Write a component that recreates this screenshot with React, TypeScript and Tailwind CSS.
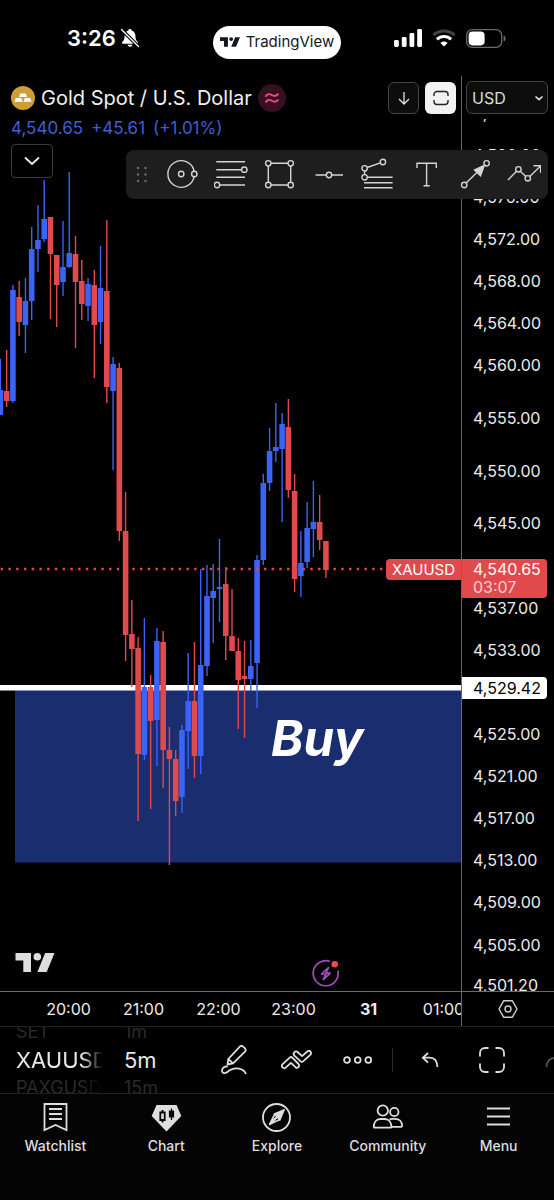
import { ReactNode } from "react";

type Candle = ["up" | "down", number, number, number, number];

// direction, high, body top, body bottom, low
const candles: Candle[] = [
  ["up", 359, 390, 415, 415],
  ["down", 350, 391, 401, 407],
  ["up", 285, 290, 401, 403],
  ["down", 281, 297, 322, 336],
  ["up", 278, 301, 325, 353],
  ["up", 227, 249, 301, 320],
  ["up", 205, 240, 249, 272],
  ["up", 180, 219, 239, 242],
  ["down", 217, 217, 254, 319],
  ["down", 255, 255, 285, 327],
  ["up", 221, 267, 282, 296],
  ["up", 172, 253, 267, 268],
  ["down", 236, 254, 282, 348],
  ["down", 260, 281, 304, 320],
  ["up", 278, 284, 306, 321],
  ["down", 270, 285, 325, 378],
  ["up", 246, 288, 322, 344],
  ["down", 220, 291, 387, 403],
  ["up", 357, 364, 391, 470],
  ["down", 363, 368, 531, 541],
  ["down", 492, 531, 635, 661],
  ["down", 600, 634, 649, 687],
  ["down", 637, 648, 754, 821],
  ["up", 618, 687, 755, 760],
  ["down", 675, 687, 721, 809],
  ["up", 628, 641, 720, 766],
  ["down", 631, 642, 750, 788],
  ["down", 727, 750, 759, 865],
  ["down", 750, 759, 801, 816],
  ["up", 725, 730, 797, 813],
  ["up", 653, 701, 731, 769],
  ["down", 642, 701, 756, 778],
  ["up", 569, 665, 756, 774],
  ["up", 565, 596, 666, 676],
  ["up", 564, 591, 598, 643],
  ["up", 539, 587, 589, 622],
  ["down", 567, 584, 636, 660],
  ["down", 589, 636, 651, 651],
  ["down", 638, 651, 680, 729],
  ["down", 641, 676, 679, 738],
  ["up", 640, 666, 679, 691],
  ["up", 555, 560, 663, 708],
  ["up", 474, 483, 560, 565],
  ["up", 428, 451, 483, 491],
  ["up", 403, 447, 451, 462],
  ["up", 413, 424, 449, 522],
  ["down", 399, 427, 490, 498],
  ["down", 474, 491, 579, 592],
  ["up", 531, 563, 576, 597],
  ["up", 502, 528, 562, 568],
  ["up", 481, 522, 529, 557],
  ["down", 495, 522, 540, 550],
  ["down", 541, 541, 570, 578],
];

const UP = "#3b63f6";
const DOWN = "#e04a4d";
const PLOT_TOP = 76;

const axisPrices = [
  4584, 4580, 4576, 4572, 4568, 4564, 4560, 4555, 4550, 4545, 4537, 4533,
  4525, 4521, 4517, 4513, 4509, 4505, 4501.2,
];

const times = ["20:00", "21:00", "22:00", "23:00", "31", "01:00"];

const priceToY = (price: number) => Math.round((4572 - price) * 10.53) + 163;

const formatPrice = (price: number) =>
  price.toLocaleString("en-US", { minimumFractionDigits: 2 });

function TradingViewLogo({ className }: { className: string }) {
  return (
    <svg className={className} viewBox="0 0 39 19" fill="currentColor">
      <path d="M0 0h15.5v19H7.8V7.6H0z" />
      <circle cx="21.8" cy="3.8" r="3.8" />
      <path d="M29.6 0H39l-7.8 19h-9.3z" />
    </svg>
  );
}

function StatusBar() {
  return (
    <header className="grid h-[76px] grid-cols-3 items-center">
      <div className="flex items-center gap-1 pl-[67px] text-white">
        <span className="text-[22px] leading-6 font-semibold">3:26</span>
        <svg className="h-5 w-5 shrink-0" viewBox="0 0 20 20" fill="currentColor">
          <path d="M10 1c.9 0 1.6.6 1.7 1.4 2.3.8 3.7 2.8 3.7 5.2 0 3.5.7 4.7 1.7 5.7.6.6.9 1 .9 1.4 0 .6-.5 1-1.3 1H3.3c-.8 0-1.3-.4-1.3-1 0-.4.3-.8.9-1.4 1-1 1.7-2.2 1.7-5.7 0-2.4 1.4-4.4 3.7-5.2C8.4 1.6 9.1 1 10 1z" />
          <path d="M7.5 16.800h5c-.3 1.3-1.3 2-2.5 2s-2.2-.7-2.5-2z" />
          <path d="M1.500 1.500l17 17" stroke="#000" strokeWidth="3.6" />
          <path d="M1.500 1.500l17 17" stroke="currentColor" strokeWidth="1.4" strokeLinecap="round" />
        </svg>
      </div>
      <div className="mt-2 flex h-[33px] w-32 items-center justify-center gap-[6px] justify-self-center rounded-full bg-white text-[#131722]">
        <TradingViewLogo className="h-[10px] w-5" />
        <span className="text-[15px]">TradingView</span>
      </div>
      <div className="flex items-center justify-end gap-[10px] pr-12">
        <svg className="h-[18px] w-7" viewBox="0 0 28 18" fill="#fff">
          <rect x="0" y="11" width="4.8" height="7" rx="1.4" />
          <rect x="7.8" y="8" width="4.8" height="10" rx="1.4" />
          <rect x="15.5" y="4" width="4.8" height="14" rx="1.4" />
          <rect x="23.2" y="0" width="4.8" height="18" rx="1.4" />
        </svg>
        <svg className="h-[18px] w-6" viewBox="0 0 24 18" fill="none" strokeWidth="3">
          <path d="M1.5 6.2a15.4 15.4 0 0 1 21 0" stroke="#444" />
          <path d="M5 10.4a10.2 10.2 0 0 1 14 0" stroke="#fff" />
          <path d="M12 17.6l-3.6-3.7a5.2 5.2 0 0 1 7.2 0z" fill="#fff" />
        </svg>
        <svg className="h-[19px] w-10" viewBox="0 0 40 19" fill="none">
          <rect x="0.7" y="0.7" width="35" height="17.6" rx="5.5" stroke="#6b6b6b" strokeWidth="1.3" />
          <rect x="2.6" y="2.6" width="16" height="13.8" rx="3.8" fill="#fff" />
          <path d="M37.6 6.5c1.5.5 2 1.600 2 3s-.5 2.500-2 3z" fill="#6b6b6b" />
        </svg>
      </div>
    </header>
  );
}

function Plot() {
  return (
    <svg className="block h-[915px] w-full" role="img" aria-label="Gold Spot candles">
      <g transform={`translate(0 ${-PLOT_TOP})`}>
        <rect x="15" y="690" width="100%" height="172.5" fill="#192d6f" />
        <rect x="0" y="685" width="100%" height="5.5" fill="#fff" />
        {candles.map(([dir, high, top, bottom, low], i) => {
          const x = 0.4 + i * 6.26;
          const color = dir === "up" ? UP : DOWN;
          return (
            <g key={i} fill={color}>
              <rect x={x - 0.7} y={high} width={1.4} height={low - high} />
              <rect x={x - 2.8} y={top} width={5.6} height={bottom - top} />
            </g>
          );
        })}
        <line
          x1="0.7"
          x2="384"
          y1="569"
          y2="569"
          stroke={DOWN}
          strokeWidth="2.4"
          strokeDasharray="2.4 5.34"
        />
        <text x="271" y="756" fill="#fff" className="text-[49px] font-bold italic">
          Buy
        </text>
      </g>
    </svg>
  );
}

function ChartHeader() {
  return (
    <div className="absolute inset-x-0 top-0 pt-[5px] pr-[5px] pl-[11px]">
      <div className="flex items-center gap-[6px]">
        <svg className="h-6 w-6 shrink-0" viewBox="0 0 24 24">
          <circle cx="12" cy="12" r="12" fill="#cf9d35" />
          <path
            d="M9.3 7.500h5.400l1.4 3.600H7.900zM4.800 12h5.400l1.4 3.700H3.4zM13.800 12h5.400l1.4 3.700h-8.200z"
            fill="#fff"
          />
        </svg>
        <h1 className="text-xl leading-[34px] whitespace-nowrap text-[#f0f0f0]">Gold Spot / U.S. Dollar</h1>
        <svg className="h-7 w-7 shrink-0" viewBox="0 0 28 28" fill="none">
          <circle cx="14" cy="14" r="14" fill="#35101f" />
          <path
            d="M7.5 12.700c1.6-3 3.8-3.2 6.3-1.700s4.6 1.400 6.7-1.300M7.5 18.500c1.6-3 3.8-3.200 6.3-1.700s4.6 1.400 6.700-1.300"
            stroke="#ee4b86"
            strokeWidth="1.9"
          />
        </svg>
        <button
          aria-label="Scroll down"
          className="ml-auto flex h-8 w-[31px] shrink-0 items-center justify-center rounded-md border border-[#444] bg-[#0d0d0d]"
        >
          <svg className="h-4 w-4" viewBox="0 0 16 16" fill="none" stroke="#e4e4e4" strokeWidth="1.3">
            <path d="M8 2v12M3 9l5 5 5-5" />
          </svg>
        </button>
        <button
          aria-label="Fit"
          className="flex h-8 w-[31px] shrink-0 items-center justify-center rounded-md bg-[#f2f2f2]"
        >
          <svg className="h-4 w-4" viewBox="0 0 16 16" fill="none" stroke="#222" strokeWidth="1.4">
            <path d="M1 6V4.500a3 3 0 0 1 3-3h8a3 3 0 0 1 3 3V6M1 10v1.500a3 3 0 0 0 3 3h8a3 3 0 0 0 3-3V10" />
          </svg>
        </button>
      </div>
      <p className="mt-[3px] flex gap-2 text-[17px] leading-5 text-[#3f5fd8]">
        <span>4,540.65</span>
        <span>+45.61</span>
        <span>(+1.01%)</span>
      </p>
      <button
        aria-label="Show indicators"
        className="mt-[6px] flex h-[34px] w-[42px] items-center justify-center rounded-[4px] border border-[#3a3a3a] bg-black"
      >
        <svg className="h-4 w-4" viewBox="0 0 16 16" fill="none" stroke="#f0f0f0" strokeWidth="1.8">
          <path d="M1 4.500l7 6.500 7-6.500" />
        </svg>
      </button>
    </div>
  );
}

const tools: { name: string; icon: ReactNode }[] = [
  {
    name: "Circle",
    icon: (
      <>
        <path d="M29.2 14.300A13.3 13.3 0 1 0 29.2 19.700" />
        <circle cx="16.2" cy="17" r="2.7" />
        <circle cx="29.3" cy="17" r="2.7" />
      </>
    ),
  },
  {
    name: "Fib retracement",
    icon: (
      <>
        <path d="M2.3 4.700H31M2.3 12.700h25.500M2.3 20.300H31M5.800 28H31" />
        <circle cx="30.3" cy="12.7" r="2.7" />
        <circle cx="3" cy="28" r="2.7" />
      </>
    ),
  },
  {
    name: "Rectangle",
    icon: (
      <>
        <path d="M8 6.300h17M8 28h17M5.300 9v16.300M27.700 9v16.300" />
        <circle cx="5.3" cy="6.3" r="2.7" />
        <circle cx="27.7" cy="6.3" r="2.7" />
        <circle cx="5.3" cy="28" r="2.7" />
        <circle cx="27.7" cy="28" r="2.7" />
      </>
    ),
  },
  {
    name: "Horizontal line",
    icon: (
      <>
        <path d="M3.5 18h10.800M19.700 18h11.300" />
        <circle cx="17" cy="18" r="2.7" />
      </>
    ),
  },
  {
    name: "Fib extension",
    icon: (
      <>
        <path d="M7.200 10.500l13.200-4.600M4.600 14v3.600M7.300 20.300h25.300M4 25.700h28.600M4 30.700h28.600" />
        <circle cx="22.9" cy="5" r="2.7" />
        <circle cx="4.6" cy="11.3" r="2.7" />
        <circle cx="4.6" cy="20.3" r="2.7" />
      </>
    ),
  },
  {
    name: "Text",
    icon: <path d="M8 11V6.300h19.300V11M17.600 6.300v22.400M14.500 28.700h6.300" />,
  },
  {
    name: "Arrow",
    icon: (
      <>
        <path d="M8.100 26.100L24 10.500" />
        <path d="M26.300 8.300L16.500 13l6 5.800z" fill="currentColor" />
        <circle cx="28.6" cy="6.3" r="2.7" />
        <circle cx="6.2" cy="28" r="2.7" />
      </>
    ),
  },
  {
    name: "Path",
    icon: (
      <>
        <path d="M1 23l8.500-8.700M13.300 14.200l5.600 5.200M22.700 19.400L33.600 8.900M26.500 8.700h7.100v7" />
        <circle cx="11.4" cy="12.3" r="2.7" />
        <circle cx="20.8" cy="21.3" r="2.7" />
      </>
    ),
  },
];

function DrawingToolbar() {
  return (
    <div className="absolute top-[74px] right-[6px] left-[126px] flex h-[49px] items-center rounded-lg bg-[#1e1e1e] text-[#d4d4d4]">
      <svg className="mr-2 ml-2 h-5 w-4 shrink-0" viewBox="0 0 16 20" fill="#666">
        <circle cx="4" cy="3" r="1.3" />
        <circle cx="11.5" cy="3" r="1.3" />
        <circle cx="4" cy="9.5" r="1.3" />
        <circle cx="11.5" cy="9.5" r="1.3" />
        <circle cx="4" cy="16" r="1.3" />
        <circle cx="11.5" cy="16" r="1.3" />
      </svg>
      {tools.map((tool) => (
        <button key={tool.name} aria-label={tool.name} className="flex flex-1 justify-center pb-px">
          <svg
            className="h-[34px] w-[34px] shrink-0"
            viewBox="0 0 34 34"
            fill="none"
            stroke="currentColor"
            strokeWidth="1.4"
          >
            {tool.icon}
          </svg>
        </button>
      ))}
    </div>
  );
}

function PriceAxis() {
  return (
    <div className="relative w-[93px] shrink-0 overflow-hidden border-l border-[#6a6a6a] text-base leading-5 text-[#ececec]">
      {axisPrices.map((price) => (
        <span
          key={price}
          className="absolute left-[11px] -translate-y-1/2"
          style={{ top: priceToY(price) }}
        >
          {formatPrice(price)}
        </span>
      ))}
      <div className="absolute top-[483px] right-[7px] left-0 rounded-r-sm bg-[#e04a4d] pb-[3px] pl-[11px] text-white">
        <div>4,540.65</div>
        <div className="leading-4 text-[#f7cfd0]">03:07</div>
      </div>
      <div className="absolute top-[601px] right-[7px] left-0 rounded-r-sm bg-white py-px pl-[11px] text-black">
        4,529.42
      </div>
      <div className="absolute inset-x-0 top-0 h-[43px] bg-black pt-[5px] pr-[6px] pl-1">
        <label className="relative block">
          <select
            aria-label="Currency"
            className="h-[33px] w-full appearance-none rounded-md border border-[#444] bg-[#0d0d0d] pl-[5px] text-base text-[#dcdcdc]"
          >
            <option>USD</option>
          </select>
          <svg
            className="pointer-events-none absolute top-3 right-1 h-[10px] w-[10px]"
            viewBox="0 0 10 10"
            fill="none"
            stroke="#e4e4e4"
            strokeWidth="1.6"
          >
            <path d="M1.5 3.500L5 6.700l3.500-3.200" />
          </svg>
        </label>
      </div>
    </div>
  );
}

function ChartArea() {
  return (
    <section className="relative">
      <div className="flex">
        <div className="relative min-w-0 flex-1">
          <Plot />
          <ChartHeader />
          <span className="absolute top-[483px] right-0 rounded-l-sm bg-[#e04a4d] px-[6px] text-[15px] leading-[21px] text-white">
            XAUUSD
          </span>
          <div className="absolute inset-x-0 bottom-0 flex items-end pl-[15px]">
            <TradingViewLogo className="mb-[19px] h-[19px] w-10 text-[#dedede]" />
            <button aria-label="Events" className="absolute bottom-1 left-[312px]">
              <svg className="h-7 w-7" viewBox="0 0 28 28" fill="none">
                <path d="M18 2.500A12.500 12.500 0 1 0 25.900 11.500" stroke="#a34cc0" strokeWidth="1.7" />
                <path d="M16.500 8.500L9.500 15h4.400l-2.600 5.500 7-6.300h-4.400z" stroke="#a34cc0" strokeWidth="1.7" strokeLinejoin="round" />
                <circle cx="22.7" cy="5.2" r="3.3" fill="#ee4a50" />
              </svg>
            </button>
          </div>
        </div>
        <PriceAxis />
      </div>
      <DrawingToolbar />
      <div className="flex h-[35px] border-t border-[#6a6a6a]">
        <div className="flex min-w-0 flex-1 items-center overflow-hidden pl-[31px] text-base text-[#ececec]">
          {times.map((time) => (
            <span
              key={time}
              className={`w-[75px] shrink-0 text-center ${time.includes(":") ? "" : "font-bold"}`}
            >
              {time}
            </span>
          ))}
        </div>
        <button
          aria-label="Scale settings"
          className="flex w-[93px] items-center justify-center border-l border-[#6a6a6a]"
        >
          <svg className="h-5 w-5" viewBox="0 0 20 20" fill="none" stroke="#cfcfcf" strokeWidth="1.4">
            <path d="M5.600 1.800h8.800L19 10l-4.600 8.200H5.600L1 10z" strokeLinejoin="round" />
            <circle cx="10" cy="10" r="3" />
          </svg>
        </button>
      </div>
    </section>
  );
}

function Wheel({ items, className }: { items: string[]; className: string }) {
  return (
    <div className={`flex h-full shrink-0 flex-col items-start justify-center overflow-hidden ${className}`}>
      <span className="text-lg leading-5 text-[#2b2b2b]">{items[0]}</span>
      <span className="text-[22px] leading-9 text-[#e8e8e8]">{items[1]}</span>
      <span className="text-lg leading-5 text-[#2b2b2b]">{items[2]}</span>
    </div>
  );
}

function BottomToolbar() {
  const button = "flex w-[62px] shrink-0 items-center justify-center";
  return (
    <div className="flex h-[67px] items-center overflow-hidden border-t border-[#222] pl-4 text-[#dedede]">
      <Wheel
        items={["SET", "XAUUSD", "PAXGUSD"]}
        className="w-[87px] [mask-image:linear-gradient(to_right,#000_75%,transparent)]"
      />
      <Wheel items={["1m", "5m", "15m"]} className="ml-[21px] w-[79px]" />
      <button aria-label="Draw" className={button}>
        <svg className="h-[30px] w-[26px]" viewBox="0 0 26 30" fill="none" stroke="currentColor" strokeWidth="1.8" strokeLinejoin="round">
          <path d="M6.500 19.500l.8-5.500L18.600 1.800c1.200-1.200 2.600-1 3.700 0l1.500 1.400c1.100 1.100 1.100 2.500 0 3.700L12 18.300zM7.300 14l4.700 4.300" />
          <path d="M6 21.500c-4-.3-5.500 3-4.800 5.200.5 1.800 3.200 2 4.800.6 3.700-3.200 7.500-4.600 12-3.700 3 .6 5.300 2 6.700 4.700" strokeLinecap="round" />
        </svg>
      </button>
      <button aria-label="Indicators" className={button}>
        <svg className="h-5 w-[31px]" viewBox="0 0 31 20" fill="none" stroke="currentColor" strokeWidth="1.8" strokeLinejoin="round">
          <path d="M1.400 14.400L8.700 7.600c.8-.8 1.800-.8 2.600 0l6.200 6.400c1.800 2-.9 5-3 3.200l-4.600-4.300-5.200 4.700c-2.200 1.900-5-1.300-3.300-3.200z" />
          <path d="M13.400 5.600c-2-2.200.8-5.400 3.200-3.600l4.500 4.100 5.200-4.600c2.200-1.900 4.800 1.200 3.200 3.100l-7.400 6.800c-.8.7-1.700.7-2.500 0z" />
        </svg>
      </button>
      <button aria-label="More" className={button}>
        <svg className="h-2 w-[30px]" viewBox="0 0 30 8" fill="none" stroke="currentColor" strokeWidth="1.8">
          <circle cx="4" cy="4" r="2.9" />
          <circle cx="14.7" cy="4" r="2.9" />
          <circle cx="25.3" cy="4" r="2.9" />
        </svg>
      </button>
      <div className="mr-[6px] ml-[3px] h-6 w-px shrink-0 bg-[#2a2a2a]" />
      <button aria-label="Undo" className={button}>
        <svg className="h-4 w-[18px]" viewBox="0 0 18 16" fill="none" stroke="currentColor" strokeWidth="1.8">
          <path d="M7 1L1.800 5.700 7 10.600M2 5.700h6.500c5 0 7.700 3 8 9.300" />
        </svg>
      </button>
      <button aria-label="Fullscreen" className={button}>
        <svg className="h-[26px] w-[26px]" viewBox="0 0 26 26" fill="none" stroke="currentColor" strokeWidth="1.8">
          <path d="M1 9.500V6a5 5 0 0 1 5-5h3.500M16.500 1H20a5 5 0 0 1 5 5v3.500M25 16.500V20a5 5 0 0 1-5 5h-3.500M9.500 25H6a5 5 0 0 1-5-5v-3.500" />
        </svg>
      </button>
      <button aria-label="Redo" className={button}>
        <svg className="h-4 w-[18px]" viewBox="0 0 18 16" fill="none" stroke="#555" strokeWidth="1.8">
          <path d="M11 1l5.200 4.700L11 10.600M16 5.700h-5C5 5.700 1.800 9 1.500 15" />
        </svg>
      </button>
    </div>
  );
}

const navItems: { label: string; icon: ReactNode }[] = [
  {
    label: "Watchlist",
    icon: (
      <path d="M4.500 2h22v26l-11-5-11 5zM9 7h13M9 12h13M9 17h13" />
    ),
  },
  {
    label: "Chart",
    icon: (
      <>
        <path d="M5.500 3h20l4.800 11-14.800 15.500L.7 14z" fill="currentColor" stroke="none" />
        <path d="M9.300 10.500h4.400V18H9.300zM11.500 8v2.500M11.500 18v2.500" stroke="#050505" />
        <path d="M18.500 9h4v6h-4zM20.500 6.500V18" fill="#050505" stroke="#050505" strokeWidth="1.2" />
      </>
    ),
  },
  {
    label: "Explore",
    icon: (
      <>
        <circle cx="15.5" cy="15.500" r="13.500" />
        <path d="M22.500 8.500l-8.700 3.700-5 10z" strokeLinejoin="round" />
        <path d="M22.500 8.500l-3.800 9-9.900 4.700z" strokeLinejoin="round" />
        <path d="M22.500 8.500l-3.800 9-4.900-5.300z" fill="currentColor" />
      </>
    ),
  },
  {
    label: "Community",
    icon: (
      <>
        <circle cx="10.8" cy="8.5" r="5.2" />
        <circle cx="22.3" cy="10" r="4.2" />
        <path d="M1.800 25c0-4.800 2.500-8 6.400-8h4.600c4 0 6.600 3.200 6.600 8 0 .4-.4.700-.8.700H2.600c-.5 0-.8-.3-.8-.7z" />
        <path d="M17.500 17.300c.8-.3 1.700-.5 2.600-.5h3c4 0 7 2.700 7 7.200 0 .5-.4.800-.9.800h-9.700" />
      </>
    ),
  },
  {
    label: "Menu",
    icon: <path d="M4 6.500h23M4 14.500h23M4 22.500h23" />,
  },
];

function BottomNav() {
  return (
    <nav className="grid flex-1 grid-cols-5 items-start border-t border-[#222] bg-[#040404] pt-2 pb-11">
      {navItems.map((item) => (
        <a
          key={item.label}
          href={`#${item.label.toLowerCase()}`}
          className="flex flex-col items-center gap-[3px] text-[#dedede]"
        >
          <svg
            className="h-[31px] w-[31px]"
            viewBox="0 0 31 31"
            fill="none"
            stroke="currentColor"
            strokeWidth="1.8"
          >
            {item.icon}
          </svg>
          <span className="text-sm leading-5 font-medium">{item.label}</span>
        </a>
      ))}
    </nav>
  );
}

export default function App() {
  return (
    <div className="flex min-h-screen flex-col overflow-hidden bg-black font-['Inter','Liberation_Sans',sans-serif]">
      <StatusBar />
      <ChartArea />
      <BottomToolbar />
      <BottomNav />
    </div>
  );
}
